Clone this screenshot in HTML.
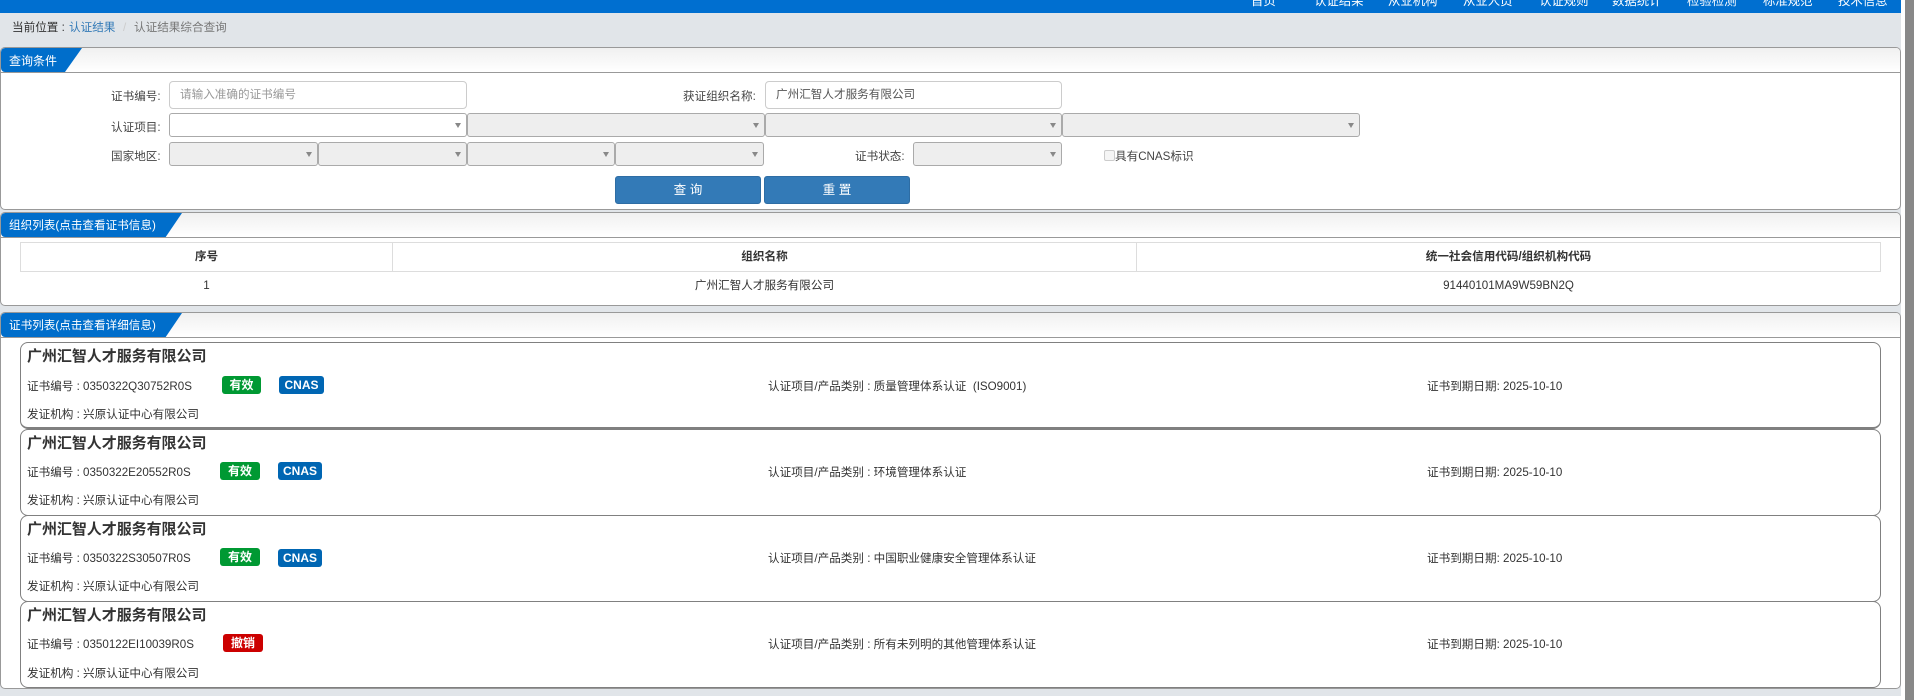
<!DOCTYPE html>
<html lang="zh-CN"><head><meta charset="utf-8"><title>认证结果综合查询</title>
<style>
html,body{margin:0;padding:0;width:1914px;height:700px;overflow:hidden;background:#fff}
body{position:relative;font:11.6px/20px "Liberation Sans","Noto Sans CJK SC",sans-serif;color:#333}
div,span{position:absolute;box-sizing:border-box;white-space:nowrap}
.panel{left:0;width:1901px;background:#fff;border:1px solid #999;border-radius:5px;overflow:hidden}
.head{left:0;top:0;width:100%;height:25px;border-bottom:1px solid #999;background:linear-gradient(#f0f0f0,#fff)}
.tab{left:0;top:0;height:24px;background:#006ecb;color:#fff;line-height:26px;padding-left:8px;border-radius:4px 0 0 4px}
.t{height:20px}
.inp{background:#fff;border:1px solid #ccc;border-radius:4px;height:28px;line-height:26px;padding-left:10px;color:#555;left:169px}
.sel{height:24px;border:1px solid #aaa;border-radius:3px;background:#eee}
.sel:after{content:"";position:absolute;right:5px;top:50%;margin-top:-2px;border:3px solid transparent;border-top:5px solid #888;border-bottom:0}
.btn{top:176px;height:28px;background:#337ab7;border:1px solid #2e6da4;border-radius:3px;color:#fff;text-align:center;line-height:26px;font-size:12.6px}
.th{top:242px;height:30px;border:1px solid #ddd;text-align:center;font-weight:bold;line-height:28px;background:#fff}
.td{top:276px;text-align:center}
.card{left:20px;width:1861px;background:#fff;border:1px solid #808080;border-radius:8px}
.ttl{left:27px;font-size:15px;font-weight:bold;height:20px;color:#333;letter-spacing:-.05px}
.bdg{height:18px;border-radius:3px;color:#fff;font-weight:bold;text-align:center;line-height:19px;font-size:12px}
.g{background:#093}.b{background:#0066b3}.r{background:#c00}
.nav{top:-9px;color:#fff;font-size:12.4px}
.lb{color:#444}
</style></head><body>
<div style="left:0;top:0;width:1901px;height:696px;background:#e1e5e9"></div>
<div style="left:1905px;top:0;width:9px;height:700px;background:#888"></div>
<div style="left:0;top:0;width:1901px;height:13px;background:#006fd0;overflow:hidden">
<span class="nav" style="left:1251px">首页</span><span class="nav" style="left:1314px">认证结果</span><span class="nav" style="left:1388px">从业机构</span><span class="nav" style="left:1463px">从业人员</span><span class="nav" style="left:1539px">认证规则</span><span class="nav" style="left:1612px">数据统计</span><span class="nav" style="left:1687px">检验检测</span><span class="nav" style="left:1763px">标准规范</span><span class="nav" style="left:1838px">技术信息</span>
</div>
<span class="t" style="left:12px;top:18px">当前位置 :</span><span class="t" style="left:69px;top:18px;color:#337ab7">认证结果</span><span class="t" style="left:123px;top:18px;color:#ccc">/</span><span class="t" style="left:134px;top:18px;color:#777">认证结果综合查询</span>

<div class="panel" style="top:47px;height:163px"><div class="head"></div><div class="tab" style="width:81px;font-size:12px;clip-path:polygon(0 0,100% 0,79% 100%,0 100%)">查询条件</div></div>
<span class="t lb" style="left:111px;top:87px">证书编号:</span>
<div class="inp" style="top:81px;width:298px;color:#999">请输入准确的证书编号</div>
<span class="t lb" style="left:683px;top:87px">获证组织名称:</span>
<div class="inp" style="left:765px;top:81px;width:297px">广州汇智人才服务有限公司</div>
<span class="t lb" style="left:111px;top:118px">认证项目:</span>
<div class="sel" style="left:169px;top:113px;width:298px;background:#fff"></div>
<div class="sel" style="left:467px;top:113px;width:298px"></div>
<div class="sel" style="left:765px;top:113px;width:297px"></div>
<div class="sel" style="left:1062px;top:113px;width:298px"></div>
<span class="t lb" style="left:111px;top:147px">国家地区:</span>
<div class="sel" style="left:169px;top:142px;width:149px"></div>
<div class="sel" style="left:318px;top:142px;width:149px"></div>
<div class="sel" style="left:467px;top:142px;width:148px"></div>
<div class="sel" style="left:615px;top:142px;width:149px"></div>
<span class="t lb" style="left:855px;top:147px">证书状态:</span>
<div class="sel" style="left:913px;top:142px;width:149px"></div>
<div style="left:1104px;top:150px;width:11px;height:11px;border:1px solid #ccc;border-radius:2px;background:#f5f5f5"></div>
<span class="t lb" style="left:1115px;top:147px">具有CNAS标识</span>
<div class="btn" style="left:615px;width:146px">查 询</div>
<div class="btn" style="left:764px;width:146px">重 置</div>

<div class="panel" style="top:212px;height:94px"><div class="head"></div><div class="tab" style="width:181px;clip-path:polygon(0 0,100% 0,91% 100%,0 100%)">组织列表(点击查看证书信息)</div></div>
<div class="th" style="left:20px;width:373px">序号</div>
<div class="th" style="left:392px;width:745px">组织名称</div>
<div class="th" style="left:1136px;width:745px">统一社会信用代码/组织机构代码</div>
<div class="td" style="left:20px;width:373px">1</div>
<div class="td" style="left:392px;width:745px">广州汇智人才服务有限公司</div>
<div class="td" style="left:1136px;width:745px">91440101MA9W59BN2Q</div>

<div class="panel" style="top:312px;height:377px"><div class="head"></div><div class="tab" style="width:181px;clip-path:polygon(0 0,100% 0,91% 100%,0 100%)">证书列表(点击查看详细信息)</div></div>

<div class="card" style="top:342px;height:87px;border-bottom-width:2px"></div>
<span class="ttl" style="top:347px;line-height:20px">广州汇智人才服务有限公司</span>
<span class="t" style="left:27px;top:377px">证书编号 : 0350322Q30752R0S</span>
<div class="bdg g" style="left:222px;top:376px;width:39px">有效</div>
<div class="bdg b" style="left:279px;top:376px;width:45px">CNAS</div>
<span class="t" style="left:768px;top:377px">认证项目/产品类别 : 质量管理体系认证&nbsp;&nbsp;(ISO9001)</span>
<span class="t" style="left:1427px;top:377px">证书到期日期: 2025-10-10</span>
<span class="t" style="left:27px;top:405px">发证机构 : 兴原认证中心有限公司</span>

<div class="card" style="top:429px;height:87px"></div>
<span class="ttl" style="top:434px;line-height:20px">广州汇智人才服务有限公司</span>
<span class="t" style="left:27px;top:463px">证书编号 : 0350322E20552R0S</span>
<div class="bdg g" style="left:220px;top:462px;width:40px">有效</div>
<div class="bdg b" style="left:278px;top:462px;width:44px">CNAS</div>
<span class="t" style="left:768px;top:463px">认证项目/产品类别 : 环境管理体系认证</span>
<span class="t" style="left:1427px;top:463px">证书到期日期: 2025-10-10</span>
<span class="t" style="left:27px;top:491px">发证机构 : 兴原认证中心有限公司</span>

<div class="card" style="top:515px;height:87px"></div>
<span class="ttl" style="top:520px;line-height:20px">广州汇智人才服务有限公司</span>
<span class="t" style="left:27px;top:549px">证书编号 : 0350322S30507R0S</span>
<div class="bdg g" style="left:220px;top:548px;width:40px">有效</div>
<div class="bdg b" style="left:278px;top:549px;width:44px">CNAS</div>
<span class="t" style="left:768px;top:549px">认证项目/产品类别 : 中国职业健康安全管理体系认证</span>
<span class="t" style="left:1427px;top:549px">证书到期日期: 2025-10-10</span>
<span class="t" style="left:27px;top:577px">发证机构 : 兴原认证中心有限公司</span>

<div class="card" style="top:601px;height:87px"></div>
<span class="ttl" style="top:606px;line-height:20px">广州汇智人才服务有限公司</span>
<span class="t" style="left:27px;top:635px">证书编号 : 0350122EI10039R0S</span>
<div class="bdg r" style="left:223px;top:634px;width:40px">撤销</div>
<span class="t" style="left:768px;top:635px">认证项目/产品类别 : 所有未列明的其他管理体系认证</span>
<span class="t" style="left:1427px;top:635px">证书到期日期: 2025-10-10</span>
<span class="t" style="left:27px;top:664px">发证机构 : 兴原认证中心有限公司</span>
</body></html>
